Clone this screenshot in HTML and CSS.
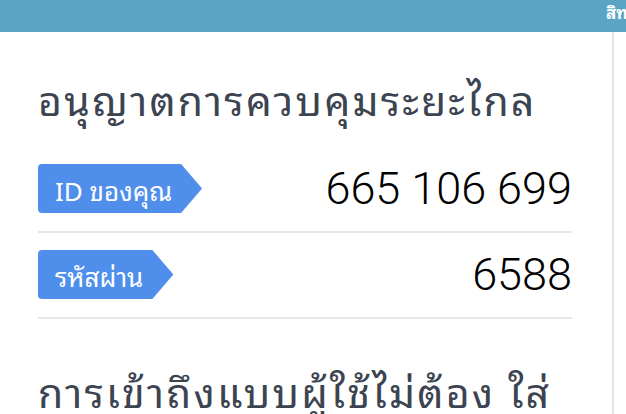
FILE: index.html
```html
<!DOCTYPE html>
<html lang="th">
<head>
<meta charset="utf-8">
<link rel="stylesheet" href="styles.css">
</head>
<body>
<header class="topbar"><span class="topbar-title">สิทธิ์</span></header>
<div class="layout">
  <main class="panel">
    <h1 class="heading">อนุญาตการควบคุมระยะไกล</h1>
    <div class="row">
      <span class="badge">ID ของคุณ</span>
      <span class="value">665 106 699</span>
    </div>
    <div class="row">
      <span class="badge">รหัสผ่าน</span>
      <span class="value">6588</span>
    </div>
    <h1 class="heading heading-second">การเข้าถึงแบบผู้ใช้ไม่ต้อง ใส่</h1>
  </main>
  <aside class="side"></aside>
</div>
</body>
</html>
```
FILE: styles.css
```css
html, body {
  margin: 0;
  padding: 0;
  background: #ffffff;
  overflow: hidden;
}
body {
  width: 626px;
  height: 414px;
  font-family: "Noto Sans Thai Looped", "Loma", "Waree", "Umpush", "Noto Sans Thai", "Noto Sans", sans-serif;
}
.topbar {
  height: 32px;
  background: #5aa5c3;
  display: flex;
  justify-content: flex-end;
  overflow: hidden;
  white-space: nowrap;
}
.topbar-title {
  color: #ffffff;
  font-weight: bold;
  font-size: 17px;
  line-height: 24px;
  margin-right: -12px;
}
.layout {
  display: flex;
  height: 382px;
}
.panel {
  width: 534px;
  padding: 0 40px 0 38px;
  border-right: 2px solid #e3e3e3;
  overflow: hidden;
}
.heading {
  margin: 0;
  padding-top: 41px;
  font-size: 41px;
  letter-spacing: 2.2px;
  line-height: 50px;
  font-weight: normal;
  color: #3b4450;
  white-space: nowrap;
  margin-bottom: 41px;
}
.heading-second {
  padding-top: 29px;
}
.row {
  display: flex;
  align-items: center;
  justify-content: space-between;
  padding: 0 0 18px;
  border-bottom: 2px solid #e6e6e6;
  margin-bottom: 17px;
}
.badge {
  display: inline-flex;
  align-items: center;
  height: 49px;
  padding: 0 30px 0 17px;
  background: #4f8feb;
  color: #ffffff;
  font-size: 26px;
  border-radius: 4px 0 0 4px;
  clip-path: polygon(0 0, calc(100% - 21px) 0, 100% 50%, calc(100% - 21px) 100%, 0 100%);
}
.value {
  font-family: "Roboto", "Liberation Sans", Arial, sans-serif;
  font-weight: 300;
  font-size: 45px;
  line-height: 49px;
  color: #000000;
}
.side {
  flex: 1;
}
```
